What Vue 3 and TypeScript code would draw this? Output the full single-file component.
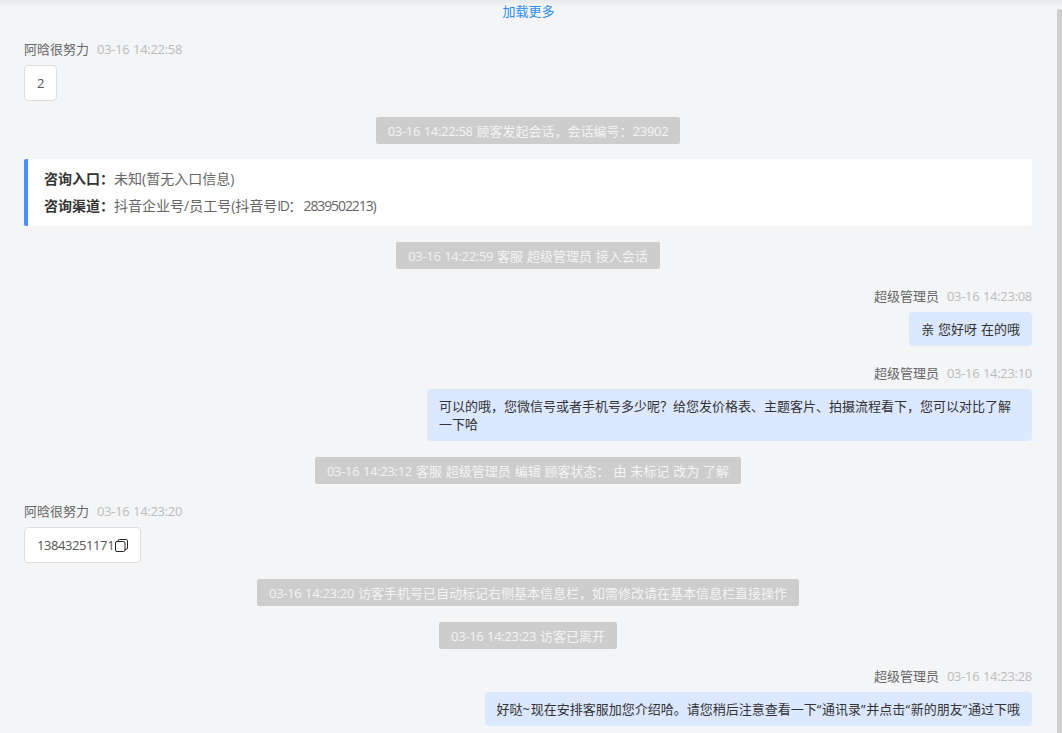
<script setup lang="ts">
type Item =
  | { kind: 'msg'; side: 'left' | 'right'; name: string; time: string; text: string; copy?: boolean }
  | { kind: 'sys'; text: string }
  | { kind: 'info' }

const items: Item[] = [
  { kind: 'msg', side: 'left', name: '阿晗很努力', time: '03-16 14:22:58', text: '2' },
  { kind: 'sys', text: '03-16 14:22:58 顾客发起会话，会话编号：23902' },
  { kind: 'info' },
  { kind: 'sys', text: '03-16 14:22:59 客服 超级管理员 接入会话' },
  { kind: 'msg', side: 'right', name: '超级管理员', time: '03-16 14:23:08', text: '亲 您好呀 在的哦' },
  {
    kind: 'msg',
    side: 'right',
    name: '超级管理员',
    time: '03-16 14:23:10',
    text: '可以的哦，您微信号或者手机号多少呢？给您发价格表、主题客片、拍摄流程看下，您可以对比了解一下哈'
  },
  { kind: 'sys', text: '03-16 14:23:12 客服 超级管理员 编辑 顾客状态： 由 未标记 改为 了解' },
  { kind: 'msg', side: 'left', name: '阿晗很努力', time: '03-16 14:23:20', text: '13843251171', copy: true },
  { kind: 'sys', text: '03-16 14:23:20 访客手机号已自动标记右侧基本信息栏，如需修改请在基本信息栏直接操作' },
  { kind: 'sys', text: '03-16 14:23:23 访客已离开' },
  {
    kind: 'msg',
    side: 'right',
    name: '超级管理员',
    time: '03-16 14:23:28',
    text: '好哒~现在安排客服加您介绍哈。请您稍后注意查看一下“通讯录”并点击“新的朋友”通过下哦'
  }
]

// digits run narrow and quotes wide in the original, so those runs get their own span
function runs(text: string) {
  return text
    .split(/(\d[\d:\- ]*\d|[~“”])/)
    .filter(Boolean)
    .map((t) => ({ t, cls: /^\d\d/.test(t) || /^\d[:\- ]/.test(t) ? 'num' : /^[~“”]/.test(t) ? 'wide' : '' }))
}
</script>

<template>
  <div class="chat">
    <div class="shadow" />
    <div class="scrollbar" />
    <div class="more">加载更多</div>
    <div class="list">
      <template v-for="(item, index) in items" :key="index">
        <div v-if="item.kind === 'sys'" class="sys">
          <span class="pill"><span v-for="(r, i) in runs(item.text)" :key="i" :class="r.cls">{{ r.t }}</span></span>
        </div>
        <div v-else-if="item.kind === 'info'" class="info">
          <div class="info-row"><b>咨询入口：</b>未知(暂无入口信息)</div>
          <div class="info-row"><b>咨询渠道：</b>抖音企业号/员工号(抖音号<span class="id-label">ID： </span><span class="id">2839502213</span>)</div>
        </div>
        <div v-else class="msg" :class="item.side">
          <div class="meta">
            <span class="name">{{ item.name }}</span>
            <span class="time num">{{ item.time }}</span>
          </div>
          <div class="bubble">
            <span><span v-for="(r, i) in runs(item.text)" :key="i" :class="r.cls">{{ r.t }}</span></span>
            <svg v-if="item.copy" class="copy" viewBox="0 0 13 13" width="13" height="13" fill="none" stroke="#222" stroke-width="1">
              <rect x="0.5" y="2.5" width="9.5" height="10" rx="1.5" />
              <path d="M3 2.5V1.8A1.3 1.3 0 0 1 4.3 .5H11.2A1.3 1.3 0 0 1 12.5 1.8V9A1.3 1.3 0 0 1 11.2 10.3H10" />
            </svg>
          </div>
        </div>
      </template>
    </div>
  </div>
</template>

<style scoped>
.chat {
  position: relative;
  height: 733px;
  overflow: hidden;
  background: #f4f5f7;
  font-family: "Open Sans", "Noto Sans CJK SC", sans-serif;
  font-size: 13px;
  word-spacing: 0.5px;
  color: #333;
}
.num {
  letter-spacing: -0.3px;
}
.bubble .num {
  letter-spacing: -0.42px;
}
.wide {
  letter-spacing: 0.75px;
}
.id {
  letter-spacing: -1.1px;
}
.id-label {
  letter-spacing: -1.5px;
}
.shadow {
  position: absolute;
  top: 0;
  left: 0;
  right: 0;
  height: 6px;
  background: linear-gradient(#e9eaec, #f4f5f7);
}
.scrollbar {
  position: absolute;
  top: 9px;
  right: 0;
  bottom: 0;
  width: 5px;
  background: #cfcfcf;
  border-radius: 2px 2px 0 0;
}
.more {
  position: relative;
  width: 1057px;
  height: 22px;
  line-height: 22px;
  text-align: center;
  color: #2d8cf0;
}
.list {
  display: flex;
  flex-direction: column;
  gap: 16px;
  width: 1008px;
  margin-left: 24px;
  padding-top: 16px;
}
.msg {
  display: flex;
  flex-direction: column;
  align-items: flex-start;
}
.msg.right {
  align-items: flex-end;
}
.meta {
  height: 22px;
  line-height: 22px;
  margin-bottom: 5px;
  display: flex;
  gap: 8px;
}
.name {
  color: #666;
}
.time {
  color: #bbb;
}
.bubble {
  max-width: 605px;
  box-sizing: border-box;
  padding: 8px 12px;
  line-height: 18px;
  border-radius: 4px;
  word-break: break-all;
}
.left .bubble {
  display: flex;
  align-items: center;
  height: 36px;
  background: #fff;
  border: 1px solid #ddd;
  color: #555;
}
.right .bubble {
  background: #dce8ff;
  color: #333;
}
.copy {
  margin-left: 1px;
}
.sys {
  text-align: center;
  height: 27px;
}
.pill {
  display: inline-block;
  height: 27px;
  line-height: 28px;
  padding: 0 12px;
  background: #cdcdcd;
  border-radius: 2px;
  color: #f4f4f4;
}
.info {
  height: 67px;
  box-sizing: border-box;
  margin-top: -1px;
  padding: 6px 16px 0;
  background: #fff;
  border-left: 4px solid #4c8dff;
  border-radius: 2px;
  font-size: 14px;
  color: #666;
}
.info-row {
  height: 27px;
  line-height: 27px;
}
.info-row b {
  color: #333;
  font-weight: 700;
}
</style>

<style>
html,
body {
  margin: 0;
  overflow: hidden;
}
</style>
